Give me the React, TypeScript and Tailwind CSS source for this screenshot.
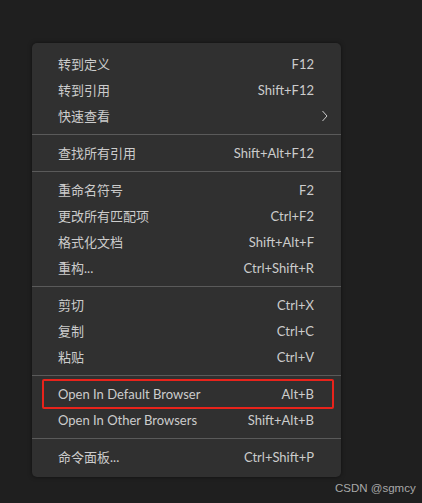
const groups = [
  [
    { label: "转到定义", key: "F12" },
    { label: "转到引用", key: "Shift+F12" },
    { label: "快速查看", key: "", sub: true },
  ],
  [{ label: "查找所有引用", key: "Shift+Alt+F12" }],
  [
    { label: "重命名符号", key: "F2" },
    { label: "更改所有匹配项", key: "Ctrl+F2" },
    { label: "格式化文档", key: "Shift+Alt+F" },
    { label: "重构...", key: "Ctrl+Shift+R" },
  ],
  [
    { label: "剪切", key: "Ctrl+X" },
    { label: "复制", key: "Ctrl+C" },
    { label: "粘贴", key: "Ctrl+V" },
  ],
  [
    { label: "Open In Default Browser", key: "Alt+B", marked: true },
    { label: "Open In Other Browsers", key: "Shift+Alt+B" },
  ],
  [{ label: "命令面板...", key: "Ctrl+Shift+P" }],
];

const Row = ({ item }: any) => {
  return (
    <div className="relative flex items-center h-[26px] pt-[2px] pl-[26px] pr-[27px] text-[#cccccc]">
      <span className="flex-1">{item.label}</span>
      <span>{item.key}</span>
      {item.sub && (
        <svg
          className="absolute right-[13px] top-[7px]"
          width="6"
          height="12"
          viewBox="0 0 6 12"
          fill="none"
        >
          <path d="M0.5 1 L5 6 L0.5 11" stroke="#cccccc" strokeWidth="1" />
        </svg>
      )}
      {item.marked && (
        <div className="absolute left-[10px] right-[7px] top-[-2px] bottom-[-2px] border-2 border-[#e8231b] rounded-[2px]" />
      )}
    </div>
  );
};

export default function App() {
  return (
    <div
      className="relative w-[422px] h-[503px] bg-[#1f1f1f] pt-[43px] pl-[32px] text-[13px]"
      style={{ fontFamily: 'Lato, "Noto Sans CJK SC", sans-serif' }}
    >
      <div className="w-[309px] bg-[#303030] rounded-[5px] pt-[8px] pb-[7px] shadow-[0_0_4px_rgba(0,0,0,0.5)]">
        {groups.map((g, i) => (
          <div key={i}>
            {i > 0 && <div className="h-px bg-[#5a5a5a] my-[5px]" />}
            {g.map((item: any) => (
              <Row key={item.label} item={item} />
            ))}
          </div>
        ))}
      </div>
      <div
        className="absolute left-[335px] top-[480px] text-[11.5px] text-[#a8a8a8]"
        style={{ fontFamily: '"Liberation Sans", sans-serif' }}
      >
        CSDN @sgmcy
      </div>
    </div>
  );
}
